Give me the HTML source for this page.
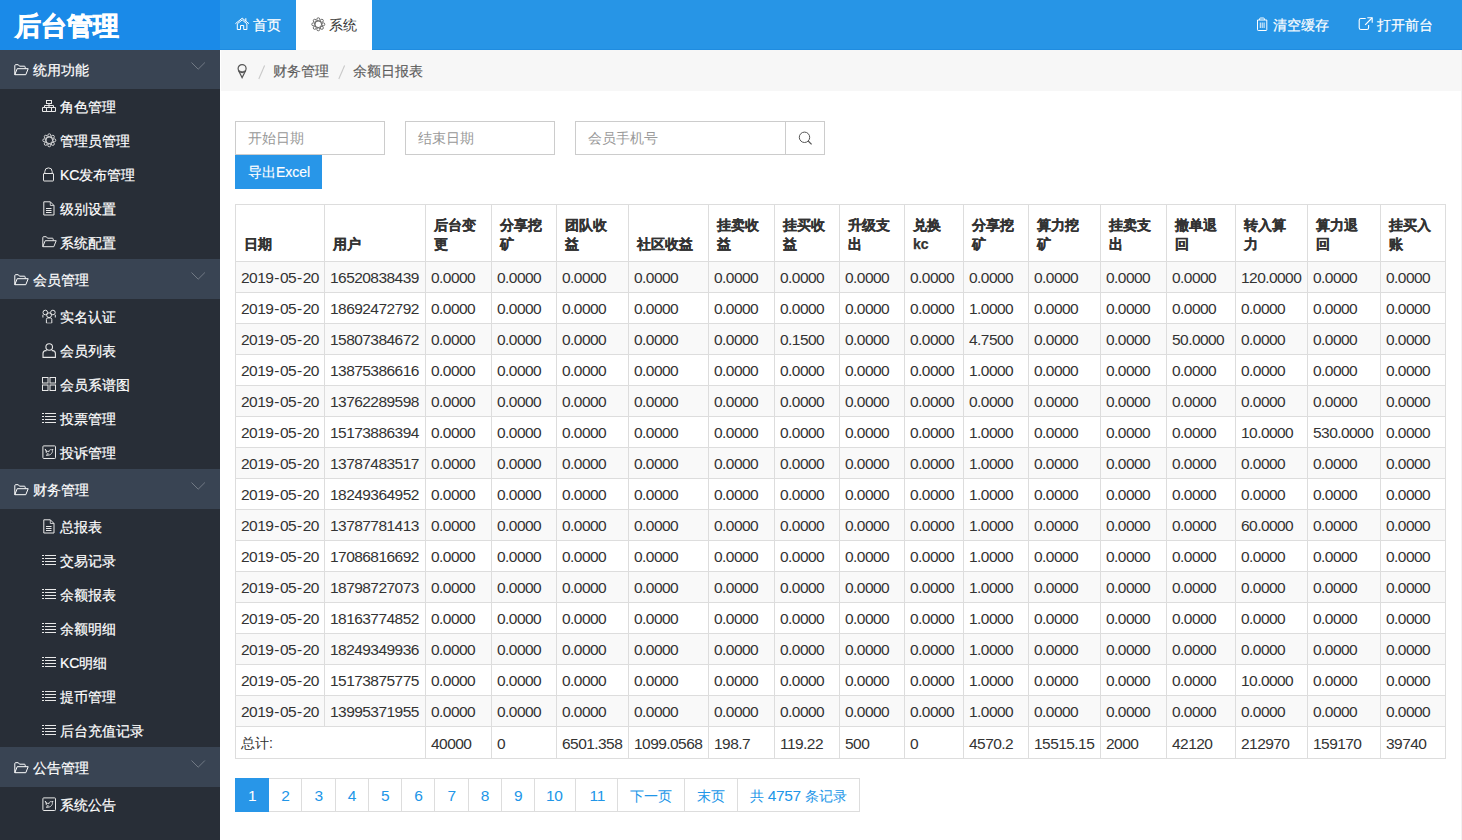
<!DOCTYPE html>
<html><head><meta charset="utf-8"><title>后台管理</title>
<style>
*{box-sizing:border-box;margin:0;padding:0}
html,body{width:1462px;height:840px;overflow:hidden;background:#fff;font-family:"Liberation Sans",sans-serif;font-size:14px;color:#333}
svg{display:block}
#hdr{position:absolute;left:0;top:0;width:1462px;height:50px;background:#2795e6;z-index:2;border-bottom:1px solid #1f8ce0}
#logo{position:absolute;left:0;top:0;width:220px;height:50px;background:#1a8ae8;color:#fff;font-size:26px;font-weight:bold;line-height:52px;padding-left:15px;letter-spacing:0px;-webkit-text-stroke:0.7px #fff}
.tab{position:absolute;top:0;height:50px;width:76px;color:#fff;line-height:50px;-webkit-text-stroke:0.2px currentColor}
.tab .ic{position:absolute;top:17px;left:15px}
.tab .tx{position:absolute;left:33px;top:0}
#tab1{left:220px}
#tab2{left:296px;background:#fff;color:#333;-webkit-text-stroke:0}
#tab2 .ic{color:#555}
.hr{position:absolute;top:0;height:50px;color:#fff;line-height:50px;-webkit-text-stroke:0.2px #fff}
.hr .ic{position:absolute;top:17px;left:0}
.hr .tx{position:absolute;left:17px;top:0;white-space:nowrap}
.hr2 .tx{left:19px!important}
#side{position:absolute;left:0;top:49px;width:220px;height:791px;background:#282e37;z-index:1}
.grp{position:relative;height:40px;background:#394453;color:#fff;line-height:40px;-webkit-text-stroke:0.2px #fff}
.grp .gi{position:absolute;left:14px;top:15px}
.grp .gt{position:absolute;left:33px;top:1px}
.grp .chev{position:absolute;left:191px;top:13px}
.item{position:relative;height:34px;color:#fff;line-height:34px;-webkit-text-stroke:0.2px #fff}
.item .ii{position:absolute;left:42px;top:10px;color:#e8e8e8}
.ii-list{top:12px!important} .ii-sitemap{top:11px!important} .ii-folder{top:11px!important}
.item .it{position:absolute;left:60px;top:1px;white-space:nowrap}
#bc{position:absolute;left:221px;top:50px;width:1240px;height:41px;background:#f7f7f7;color:#5c5c5c;-webkit-text-stroke:0.15px #5c5c5c}
#bc .pin{position:absolute;left:237px;top:14px;color:#666}
#edge{position:absolute;left:1461px;top:50px;width:1px;height:790px;background:#f2f2f2}
.inp{position:absolute;top:121px;height:34px;border:1px solid #ccc;color:#999;line-height:32px;padding-left:12px}
#btn{position:absolute;left:235px;top:155px;width:87px;height:34px;background:#2896e8;color:#fff;line-height:34px;padding-left:13px;-webkit-text-stroke:0.15px #fff}
#tbl{position:absolute;left:235px;top:204px;border-collapse:separate;border-spacing:0;table-layout:fixed;width:1211px;border-top:1px solid #ddd;border-left:1px solid #ddd}
#tbl th,#tbl td{border-right:1px solid #ddd;border-bottom:1px solid #ddd;text-align:left;white-space:nowrap;overflow:hidden}
#tbl th{height:57px;vertical-align:bottom;padding:0 0 7px 8px;font-weight:bold;line-height:19px;-webkit-text-stroke:0.25px #333}
#tbl td{height:31px;padding:1px 0 0 5px;line-height:29px;font-size:15.5px;letter-spacing:-0.55px}
.cjt{font-size:14px;letter-spacing:0}
#tbl tbody tr:nth-child(odd) td{background:#f9f9f9}
#tbl tr.tot td{background:#fff}
.hy{padding:0 1px 0 1px}
#pag{position:absolute;left:235px;top:778px;height:34px;display:flex}
#pag a{display:block;height:34px;line-height:33px;padding:0 12px;font-size:15.5px;letter-spacing:-0.4px;border:1px solid #ddd;margin-left:-1px;color:#2196e8;white-space:nowrap}
#pag a:first-child{margin-left:0}
#pag .cj{font-size:14px;letter-spacing:0}
#pag a.act{background:#2896e8;border-color:#2896e8;color:#fff;position:relative;z-index:2}
</style></head><body>
<div id="hdr">
  <div id="logo">后台管理</div>
  <div class="tab" id="tab1"><span class="ic"><svg width="15" height="14" viewBox="0 0 15 14" fill="none" stroke="currentColor" stroke-width="1"><path d="M0.4 6.7 L7.2 1.2 L14 6.7"/><path d="M10.8 1.3 V4.2" stroke-width="1.1"/><path d="M2.3 12.5 V6.8 L7.2 2.9 L11.9 6.8 V12.5 H8.7 V8.5 H5.5 V12.5 Z"/></svg></span><span class="tx">首页</span></div>
  <div class="tab" id="tab2"><span class="ic"><svg width="15" height="15" viewBox="0 0 15 15" fill="none" stroke="currentColor" stroke-width="0.85"><circle cx="7.3" cy="7.3" r="3.3"/><circle cx="7.3" cy="2.3" r="1.5"/><circle cx="7.3" cy="12.3" r="1.5"/><circle cx="2.3" cy="7.3" r="1.5"/><circle cx="12.3" cy="7.3" r="1.5"/><circle cx="3.75" cy="3.75" r="1.5"/><circle cx="10.85" cy="3.75" r="1.5"/><circle cx="3.75" cy="10.85" r="1.5"/><circle cx="10.85" cy="10.85" r="1.5"/></svg></span><span class="tx">系统</span></div>
  <div class="hr" style="left:1256px"><span class="ic"><svg width="12" height="15" viewBox="0 0 12 15" fill="none" stroke="currentColor" stroke-width="1"><path d="M3.6 3 V2 Q3.6 1 4.6 1 H7.4 Q8.4 1 8.4 2 V3"/><path d="M1.5 3 H10.8 V12.8 Q10.8 13.5 10.1 13.5 H2.2 Q1.5 13.5 1.5 12.8 Z"/><path d="M4.3 5.5 V11 M6.2 5.5 V11 M8.1 5.5 V11" stroke-width="0.9"/></svg></span><span class="tx">清空缓存</span></div>
  <div class="hr hr2" style="left:1358px;width:80px"><span class="ic"><svg width="15" height="14" viewBox="0 0 15 14" fill="none" stroke="currentColor" stroke-width="1.1"><path d="M7.7 1.5 H3 Q1.2 1.5 1.2 3.3 V10.7 Q1.2 12.5 3 12.5 H8.8 Q10.6 12.5 10.6 10.7 V8"/><path d="M9.3 0.8 H14.2 V5.7"/><path d="M14 1 L7.2 7.8" stroke-width="1.2"/></svg></span><span class="tx">打开前台</span></div>
</div>
<div id="side">
<div class="grp g1"><span class="gi"><svg width="15" height="12" viewBox="0 0 15 12" fill="none" stroke="currentColor" stroke-width="1"><path d="M0.8 10.7 V1.6 Q0.8 0.7 1.7 0.7 H4.3 L5.5 2.2 H10.3 Q11.2 2.2 11.2 3.1 V4.6"/><path d="M0.8 10.7 L3.2 4.7 H14.2 L11.8 10.7 Z"/></svg></span><span class="gt">统用功能</span><span class="chev"><svg width="15" height="8" viewBox="0 0 15 8" fill="none" stroke="#78808b" stroke-width="0.9"><path d="M0.5 0.5 L7.2 7.2 L13.9 0.5"/></svg></span></div><div class="items"><div class="item"><span class="ii ii-sitemap"><svg width="14" height="13" viewBox="0 0 14 13" fill="none" stroke="currentColor" stroke-width="1"><rect x="4.5" y="0.5" width="5" height="3"/><path d="M7 4 V5 M2.5 7 V5.5 H11.5 V7 M7 5.5 V7"/><path d="M0.5 7.5 H13.5 V11.5 H0.5 Z M4.5 7.5 V11.5 M9.5 7.5 V11.5"/></svg></span><span class="it">角色管理</span></div><div class="item"><span class="ii ii-gear"><svg width="15" height="15" viewBox="0 0 15 15" fill="none" stroke="currentColor" stroke-width="0.85"><circle cx="7.3" cy="7.3" r="3.3"/><circle cx="7.3" cy="2.3" r="1.5"/><circle cx="7.3" cy="12.3" r="1.5"/><circle cx="2.3" cy="7.3" r="1.5"/><circle cx="12.3" cy="7.3" r="1.5"/><circle cx="3.75" cy="3.75" r="1.5"/><circle cx="10.85" cy="3.75" r="1.5"/><circle cx="3.75" cy="10.85" r="1.5"/><circle cx="10.85" cy="10.85" r="1.5"/></svg></span><span class="it">管理员管理</span></div><div class="item"><span class="ii ii-lock"><svg width="13" height="15" viewBox="0 0 13 15" fill="none" stroke="currentColor" stroke-width="1"><path d="M2.8 6.5 V4.6 A3.7 3.7 0 0 1 10.2 4.6 V6.5"/><rect x="1.5" y="6.5" width="10" height="7.5" rx="0.5"/></svg></span><span class="it">KC发布管理</span></div><div class="item"><span class="ii ii-file"><svg width="13" height="15" viewBox="0 0 13 15" fill="none" stroke="currentColor" stroke-width="1"><path d="M1.8 0.8 H8.3 L12 4.5 V14 H1.8 Z"/><path d="M8.3 0.8 V4.5 H12" stroke-width="0.8"/><path d="M4 7.5 H9.5 M4 9.5 H9.5 M4 11.5 H9.5"/></svg></span><span class="it">级别设置</span></div><div class="item"><span class="ii ii-folder"><svg width="15" height="12" viewBox="0 0 15 12" fill="none" stroke="currentColor" stroke-width="1"><path d="M0.8 10.7 V1.6 Q0.8 0.7 1.7 0.7 H4.3 L5.5 2.2 H10.3 Q11.2 2.2 11.2 3.1 V4.6"/><path d="M0.8 10.7 L3.2 4.7 H14.2 L11.8 10.7 Z"/></svg></span><span class="it">系统配置</span></div></div><div class="grp"><span class="gi"><svg width="15" height="12" viewBox="0 0 15 12" fill="none" stroke="currentColor" stroke-width="1"><path d="M0.8 10.7 V1.6 Q0.8 0.7 1.7 0.7 H4.3 L5.5 2.2 H10.3 Q11.2 2.2 11.2 3.1 V4.6"/><path d="M0.8 10.7 L3.2 4.7 H14.2 L11.8 10.7 Z"/></svg></span><span class="gt">会员管理</span><span class="chev"><svg width="15" height="8" viewBox="0 0 15 8" fill="none" stroke="#78808b" stroke-width="0.9"><path d="M0.5 0.5 L7.2 7.2 L13.9 0.5"/></svg></span></div><div class="items"><div class="item"><span class="ii ii-users"><svg width="15" height="15" viewBox="0 0 15 15" fill="none" stroke="currentColor" stroke-width="1"><circle cx="3.3" cy="3.5" r="2.3"/><circle cx="10.9" cy="3.5" r="2.3"/><circle cx="7.1" cy="6.2" r="2.4"/><path d="M0.9 8.5 V5.8"/><path d="M13.3 8.5 V5.8"/><path d="M4.4 14 V10.4 Q4.4 8.9 5.9 8.9 H8.3 Q9.8 8.9 9.8 10.4 V14"/><path d="M4.4 14 H9.8" stroke-opacity="0.55"/></svg></span><span class="it">实名认证</span></div><div class="item"><span class="ii ii-user"><svg width="14" height="16" viewBox="0 0 14 16" fill="none" stroke="currentColor" stroke-width="1.1"><circle cx="7.2" cy="4" r="3.3"/><path d="M4.6 7.6 H3.8 Q1 7.6 1 10.4 V14.4 H13.4 V10.4 Q13.4 7.6 10.6 7.6 H9.8"/></svg></span><span class="it">会员列表</span></div><div class="item"><span class="ii ii-th"><svg width="15" height="15" viewBox="0 0 15 15" fill="none" stroke="currentColor" stroke-width="1"><rect x="0.5" y="0.5" width="5.5" height="5.5"/><rect x="8" y="0.5" width="5.5" height="5.5"/><rect x="0.5" y="8" width="5.5" height="5.5"/><rect x="8" y="8" width="5.5" height="5.5"/></svg></span><span class="it">会员系谱图</span></div><div class="item"><span class="ii ii-list"><svg width="14" height="11" viewBox="0 0 14 11" fill="none" stroke="currentColor" stroke-width="1"><path d="M0 0.5 H2 M3 0.5 H14 M0 3.5 H2 M3 3.5 H14 M0 6.5 H2 M3 6.5 H14 M0 9.5 H2 M3 9.5 H14"/></svg></span><span class="it">投票管理</span></div><div class="item"><span class="ii ii-tw"><svg width="14" height="14" viewBox="0 0 14 14" fill="none" stroke="currentColor" stroke-width="1"><rect x="0.9" y="0.9" width="12.6" height="12.6" rx="0.8"/><path d="M3.3 4 C3.8 5.6 5.2 6.6 7 6.7 C6.8 5.2 8.4 4.1 9.8 4.8 L11 4.3 L10.5 5.5 C10.6 8.6 7.9 10.8 4.2 10.2 C5.2 10 6 9.6 6.5 9 C5 8.6 4 7.6 3.9 6.6 C4.3 6.7 4.6 6.7 5 6.6 C3.9 6.1 3.3 5.2 3.3 4 Z" stroke-width="0.85"/></svg></span><span class="it">投诉管理</span></div></div><div class="grp"><span class="gi"><svg width="15" height="12" viewBox="0 0 15 12" fill="none" stroke="currentColor" stroke-width="1"><path d="M0.8 10.7 V1.6 Q0.8 0.7 1.7 0.7 H4.3 L5.5 2.2 H10.3 Q11.2 2.2 11.2 3.1 V4.6"/><path d="M0.8 10.7 L3.2 4.7 H14.2 L11.8 10.7 Z"/></svg></span><span class="gt">财务管理</span><span class="chev"><svg width="15" height="8" viewBox="0 0 15 8" fill="none" stroke="#78808b" stroke-width="0.9"><path d="M0.5 0.5 L7.2 7.2 L13.9 0.5"/></svg></span></div><div class="items"><div class="item"><span class="ii ii-file"><svg width="13" height="15" viewBox="0 0 13 15" fill="none" stroke="currentColor" stroke-width="1"><path d="M1.8 0.8 H8.3 L12 4.5 V14 H1.8 Z"/><path d="M8.3 0.8 V4.5 H12" stroke-width="0.8"/><path d="M4 7.5 H9.5 M4 9.5 H9.5 M4 11.5 H9.5"/></svg></span><span class="it">总报表</span></div><div class="item"><span class="ii ii-list"><svg width="14" height="11" viewBox="0 0 14 11" fill="none" stroke="currentColor" stroke-width="1"><path d="M0 0.5 H2 M3 0.5 H14 M0 3.5 H2 M3 3.5 H14 M0 6.5 H2 M3 6.5 H14 M0 9.5 H2 M3 9.5 H14"/></svg></span><span class="it">交易记录</span></div><div class="item"><span class="ii ii-list"><svg width="14" height="11" viewBox="0 0 14 11" fill="none" stroke="currentColor" stroke-width="1"><path d="M0 0.5 H2 M3 0.5 H14 M0 3.5 H2 M3 3.5 H14 M0 6.5 H2 M3 6.5 H14 M0 9.5 H2 M3 9.5 H14"/></svg></span><span class="it">余额报表</span></div><div class="item"><span class="ii ii-list"><svg width="14" height="11" viewBox="0 0 14 11" fill="none" stroke="currentColor" stroke-width="1"><path d="M0 0.5 H2 M3 0.5 H14 M0 3.5 H2 M3 3.5 H14 M0 6.5 H2 M3 6.5 H14 M0 9.5 H2 M3 9.5 H14"/></svg></span><span class="it">余额明细</span></div><div class="item"><span class="ii ii-list"><svg width="14" height="11" viewBox="0 0 14 11" fill="none" stroke="currentColor" stroke-width="1"><path d="M0 0.5 H2 M3 0.5 H14 M0 3.5 H2 M3 3.5 H14 M0 6.5 H2 M3 6.5 H14 M0 9.5 H2 M3 9.5 H14"/></svg></span><span class="it">KC明细</span></div><div class="item"><span class="ii ii-list"><svg width="14" height="11" viewBox="0 0 14 11" fill="none" stroke="currentColor" stroke-width="1"><path d="M0 0.5 H2 M3 0.5 H14 M0 3.5 H2 M3 3.5 H14 M0 6.5 H2 M3 6.5 H14 M0 9.5 H2 M3 9.5 H14"/></svg></span><span class="it">提币管理</span></div><div class="item"><span class="ii ii-list"><svg width="14" height="11" viewBox="0 0 14 11" fill="none" stroke="currentColor" stroke-width="1"><path d="M0 0.5 H2 M3 0.5 H14 M0 3.5 H2 M3 3.5 H14 M0 6.5 H2 M3 6.5 H14 M0 9.5 H2 M3 9.5 H14"/></svg></span><span class="it">后台充值记录</span></div></div><div class="grp"><span class="gi"><svg width="15" height="12" viewBox="0 0 15 12" fill="none" stroke="currentColor" stroke-width="1"><path d="M0.8 10.7 V1.6 Q0.8 0.7 1.7 0.7 H4.3 L5.5 2.2 H10.3 Q11.2 2.2 11.2 3.1 V4.6"/><path d="M0.8 10.7 L3.2 4.7 H14.2 L11.8 10.7 Z"/></svg></span><span class="gt">公告管理</span><span class="chev"><svg width="15" height="8" viewBox="0 0 15 8" fill="none" stroke="#78808b" stroke-width="0.9"><path d="M0.5 0.5 L7.2 7.2 L13.9 0.5"/></svg></span></div><div class="items"><div class="item"><span class="ii ii-tw"><svg width="14" height="14" viewBox="0 0 14 14" fill="none" stroke="currentColor" stroke-width="1"><rect x="0.9" y="0.9" width="12.6" height="12.6" rx="0.8"/><path d="M3.3 4 C3.8 5.6 5.2 6.6 7 6.7 C6.8 5.2 8.4 4.1 9.8 4.8 L11 4.3 L10.5 5.5 C10.6 8.6 7.9 10.8 4.2 10.2 C5.2 10 6 9.6 6.5 9 C5 8.6 4 7.6 3.9 6.6 C4.3 6.7 4.6 6.7 5 6.6 C3.9 6.1 3.3 5.2 3.3 4 Z" stroke-width="0.85"/></svg></span><span class="it">系统公告</span></div></div>
</div>
<div id="bc"><span style="position:absolute;left:16px;top:14px;color:#555"><svg width="11" height="15" viewBox="0 0 11 15" fill="none" stroke="currentColor" stroke-width="1.2"><circle cx="5.1" cy="4.6" r="4"/><path d="M1.5 6.6 L5.1 13.6 L8.7 6.6"/><path d="M1.6 6.9 Q5.1 8.6 8.6 6.9" stroke-width="0.9"/></svg></span><svg style="position:absolute;left:36px;top:15px" width="9" height="15"><path d="M7.6 0.5 L1.8 14" stroke="#c9c9c9" stroke-width="1.1"/></svg><span style="position:absolute;left:52px;top:1px;line-height:41px">财务管理</span><svg style="position:absolute;left:116px;top:15px" width="9" height="15"><path d="M7.6 0.5 L1.8 14" stroke="#c9c9c9" stroke-width="1.1"/></svg><span style="position:absolute;left:132px;top:1px;line-height:41px">余额日报表</span></div>
<div id="edge"></div>
<div class="inp" style="left:235px;width:150px">开始日期</div>
<div class="inp" style="left:405px;width:150px">结束日期</div>
<div class="inp" style="left:575px;width:211px">会员手机号</div>
<div class="inp" style="left:785px;width:40px;padding:0"><span style="position:absolute;left:12px;top:9px"><svg width="15" height="15" viewBox="0 0 15 15" fill="none" stroke="#555" stroke-width="1"><circle cx="6.5" cy="6.3" r="5.2"/><path d="M10.2 10 L13.6 13.4" stroke-width="1.2"/></svg></span></div>
<div id="btn">导出Excel</div>
<table id="tbl"><thead><tr><th style="width:89px">日期</th><th style="width:101px">用户</th><th style="width:66px">后台变<br>更</th><th style="width:65px">分享挖<br>矿</th><th style="width:72px">团队收<br>益</th><th style="width:80px">社区收益</th><th style="width:66px">挂卖收<br>益</th><th style="width:65px">挂买收<br>益</th><th style="width:65px">升级支<br>出</th><th style="width:59px">兑换<br>kc</th><th style="width:65px">分享挖<br>矿</th><th style="width:72px">算力挖<br>矿</th><th style="width:66px">挂卖支<br>出</th><th style="width:69px">撤单退<br>回</th><th style="width:72px">转入算<br>力</th><th style="width:73px">算力退<br>回</th><th style="width:65px">挂买入<br>账</th></tr></thead><tbody><tr><td>2019<span class="hy">-</span>05<span class="hy">-</span>20</td><td>16520838439</td><td>0.0000</td><td>0.0000</td><td>0.0000</td><td>0.0000</td><td>0.0000</td><td>0.0000</td><td>0.0000</td><td>0.0000</td><td>0.0000</td><td>0.0000</td><td>0.0000</td><td>0.0000</td><td>120.0000</td><td>0.0000</td><td>0.0000</td></tr><tr><td>2019<span class="hy">-</span>05<span class="hy">-</span>20</td><td>18692472792</td><td>0.0000</td><td>0.0000</td><td>0.0000</td><td>0.0000</td><td>0.0000</td><td>0.0000</td><td>0.0000</td><td>0.0000</td><td>1.0000</td><td>0.0000</td><td>0.0000</td><td>0.0000</td><td>0.0000</td><td>0.0000</td><td>0.0000</td></tr><tr><td>2019<span class="hy">-</span>05<span class="hy">-</span>20</td><td>15807384672</td><td>0.0000</td><td>0.0000</td><td>0.0000</td><td>0.0000</td><td>0.0000</td><td>0.1500</td><td>0.0000</td><td>0.0000</td><td>4.7500</td><td>0.0000</td><td>0.0000</td><td>50.0000</td><td>0.0000</td><td>0.0000</td><td>0.0000</td></tr><tr><td>2019<span class="hy">-</span>05<span class="hy">-</span>20</td><td>13875386616</td><td>0.0000</td><td>0.0000</td><td>0.0000</td><td>0.0000</td><td>0.0000</td><td>0.0000</td><td>0.0000</td><td>0.0000</td><td>1.0000</td><td>0.0000</td><td>0.0000</td><td>0.0000</td><td>0.0000</td><td>0.0000</td><td>0.0000</td></tr><tr><td>2019<span class="hy">-</span>05<span class="hy">-</span>20</td><td>13762289598</td><td>0.0000</td><td>0.0000</td><td>0.0000</td><td>0.0000</td><td>0.0000</td><td>0.0000</td><td>0.0000</td><td>0.0000</td><td>0.0000</td><td>0.0000</td><td>0.0000</td><td>0.0000</td><td>0.0000</td><td>0.0000</td><td>0.0000</td></tr><tr><td>2019<span class="hy">-</span>05<span class="hy">-</span>20</td><td>15173886394</td><td>0.0000</td><td>0.0000</td><td>0.0000</td><td>0.0000</td><td>0.0000</td><td>0.0000</td><td>0.0000</td><td>0.0000</td><td>1.0000</td><td>0.0000</td><td>0.0000</td><td>0.0000</td><td>10.0000</td><td>530.0000</td><td>0.0000</td></tr><tr><td>2019<span class="hy">-</span>05<span class="hy">-</span>20</td><td>13787483517</td><td>0.0000</td><td>0.0000</td><td>0.0000</td><td>0.0000</td><td>0.0000</td><td>0.0000</td><td>0.0000</td><td>0.0000</td><td>1.0000</td><td>0.0000</td><td>0.0000</td><td>0.0000</td><td>0.0000</td><td>0.0000</td><td>0.0000</td></tr><tr><td>2019<span class="hy">-</span>05<span class="hy">-</span>20</td><td>18249364952</td><td>0.0000</td><td>0.0000</td><td>0.0000</td><td>0.0000</td><td>0.0000</td><td>0.0000</td><td>0.0000</td><td>0.0000</td><td>1.0000</td><td>0.0000</td><td>0.0000</td><td>0.0000</td><td>0.0000</td><td>0.0000</td><td>0.0000</td></tr><tr><td>2019<span class="hy">-</span>05<span class="hy">-</span>20</td><td>13787781413</td><td>0.0000</td><td>0.0000</td><td>0.0000</td><td>0.0000</td><td>0.0000</td><td>0.0000</td><td>0.0000</td><td>0.0000</td><td>1.0000</td><td>0.0000</td><td>0.0000</td><td>0.0000</td><td>60.0000</td><td>0.0000</td><td>0.0000</td></tr><tr><td>2019<span class="hy">-</span>05<span class="hy">-</span>20</td><td>17086816692</td><td>0.0000</td><td>0.0000</td><td>0.0000</td><td>0.0000</td><td>0.0000</td><td>0.0000</td><td>0.0000</td><td>0.0000</td><td>1.0000</td><td>0.0000</td><td>0.0000</td><td>0.0000</td><td>0.0000</td><td>0.0000</td><td>0.0000</td></tr><tr><td>2019<span class="hy">-</span>05<span class="hy">-</span>20</td><td>18798727073</td><td>0.0000</td><td>0.0000</td><td>0.0000</td><td>0.0000</td><td>0.0000</td><td>0.0000</td><td>0.0000</td><td>0.0000</td><td>1.0000</td><td>0.0000</td><td>0.0000</td><td>0.0000</td><td>0.0000</td><td>0.0000</td><td>0.0000</td></tr><tr><td>2019<span class="hy">-</span>05<span class="hy">-</span>20</td><td>18163774852</td><td>0.0000</td><td>0.0000</td><td>0.0000</td><td>0.0000</td><td>0.0000</td><td>0.0000</td><td>0.0000</td><td>0.0000</td><td>1.0000</td><td>0.0000</td><td>0.0000</td><td>0.0000</td><td>0.0000</td><td>0.0000</td><td>0.0000</td></tr><tr><td>2019<span class="hy">-</span>05<span class="hy">-</span>20</td><td>18249349936</td><td>0.0000</td><td>0.0000</td><td>0.0000</td><td>0.0000</td><td>0.0000</td><td>0.0000</td><td>0.0000</td><td>0.0000</td><td>1.0000</td><td>0.0000</td><td>0.0000</td><td>0.0000</td><td>0.0000</td><td>0.0000</td><td>0.0000</td></tr><tr><td>2019<span class="hy">-</span>05<span class="hy">-</span>20</td><td>15173875775</td><td>0.0000</td><td>0.0000</td><td>0.0000</td><td>0.0000</td><td>0.0000</td><td>0.0000</td><td>0.0000</td><td>0.0000</td><td>1.0000</td><td>0.0000</td><td>0.0000</td><td>0.0000</td><td>10.0000</td><td>0.0000</td><td>0.0000</td></tr><tr><td>2019<span class="hy">-</span>05<span class="hy">-</span>20</td><td>13995371955</td><td>0.0000</td><td>0.0000</td><td>0.0000</td><td>0.0000</td><td>0.0000</td><td>0.0000</td><td>0.0000</td><td>0.0000</td><td>1.0000</td><td>0.0000</td><td>0.0000</td><td>0.0000</td><td>0.0000</td><td>0.0000</td><td>0.0000</td></tr><tr class="tot"><td colspan="2"><span class="cjt">总计:</span></td><td>40000</td><td>0</td><td>6501.358</td><td>1099.0568</td><td>198.7</td><td>119.22</td><td>500</td><td>0</td><td>4570.2</td><td>15515.15</td><td>2000</td><td>42120</td><td>212970</td><td>159170</td><td>39740</td></tr></tbody></table>
<div id="pag"><a class="act">1</a><a class="">2</a><a class="">3</a><a class="">4</a><a class="">5</a><a class="">6</a><a class="">7</a><a class="">8</a><a class="">9</a><a class="" style="padding-left:11px">10</a><a class="" style="padding-left:14px">11</a><a class=""><span class="cj">下一页</span></a><a class=""><span class="cj">末页</span></a><a class=""><span class="cj">共</span> 4757 <span class="cj">条记录</span></a></div>
</body></html>
